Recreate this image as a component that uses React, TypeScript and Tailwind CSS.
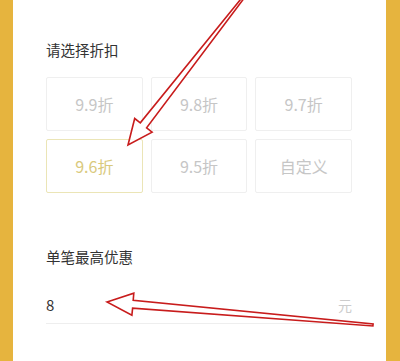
import React from 'react';

const options = [
  { label: '9.9折', active: false },
  { label: '9.8折', active: false },
  { label: '9.7折', active: false },
  { label: '9.6折', active: true },
  { label: '9.5折', active: false },
  { label: '自定义', active: false },
];

const Arrows: React.FC = () => (
  <svg className="pointer-events-none absolute inset-0" width="400" height="361" viewBox="0 0 400 361">
    <polygon
      points="128,145 134.7,118.5 140.3,122.8 242.2,-2.6 243.8,-1.4 146.6,127.8 152.1,132.1"
      fill="#ffffff"
      fillOpacity="0.85"
      stroke="#c81c1c"
      strokeWidth="1.6"
      strokeLinejoin="miter"
    />
    <polygon
      points="107,302 133.8,293.2 133.2,300.2 373.1,324 372.9,326 132.6,308.2 131.9,315.2"
      fill="#ffffff"
      fillOpacity="0.85"
      stroke="#c81c1c"
      strokeWidth="1.6"
      strokeLinejoin="miter"
    />
  </svg>
);

export default function App() {
  return (
    <div
      className="relative flex h-[361px] w-[400px] overflow-hidden bg-white"
      style={{ fontFamily: '"Noto Sans CJK SC", "Noto Sans", sans-serif' }}
    >
      <div className="w-[13px] shrink-0 bg-[#e6b43e]" />
      <div className="flex flex-1 flex-col pl-[33px] pr-[34px] pt-[40px]">
        <div className="h-[20px] text-[14.5px] leading-[20px] text-[#333333]">请选择折扣</div>
        <div className="mt-[17px] grid grid-cols-3 gap-x-[8px] gap-y-[8px]">
          {options.map((o) => (
            <div
              key={o.label}
              className={`flex h-[54px] items-center justify-center rounded-[2px] border text-[16px] ${
                o.active ? 'border-[#ebe5b6] text-[#d9c97c]' : 'border-[#efefef] text-[#c6c6c6]'
              }`}
            >
              {o.label}
            </div>
          ))}
        </div>
        <div className="mt-[54px] h-[20px] text-[14.5px] leading-[20px] text-[#333333]">单笔最高优惠</div>
        <div className="mt-[20px] flex h-[37px] items-center justify-between border-b border-[#eeeeee]">
          <span className="text-[15px] text-[#333333]">8</span>
          <span className="text-[14px] text-[#cccccc]">元</span>
        </div>
      </div>
      <div className="w-[14px] shrink-0 bg-[#e6b43e]" />
      <Arrows />
    </div>
  );
}
